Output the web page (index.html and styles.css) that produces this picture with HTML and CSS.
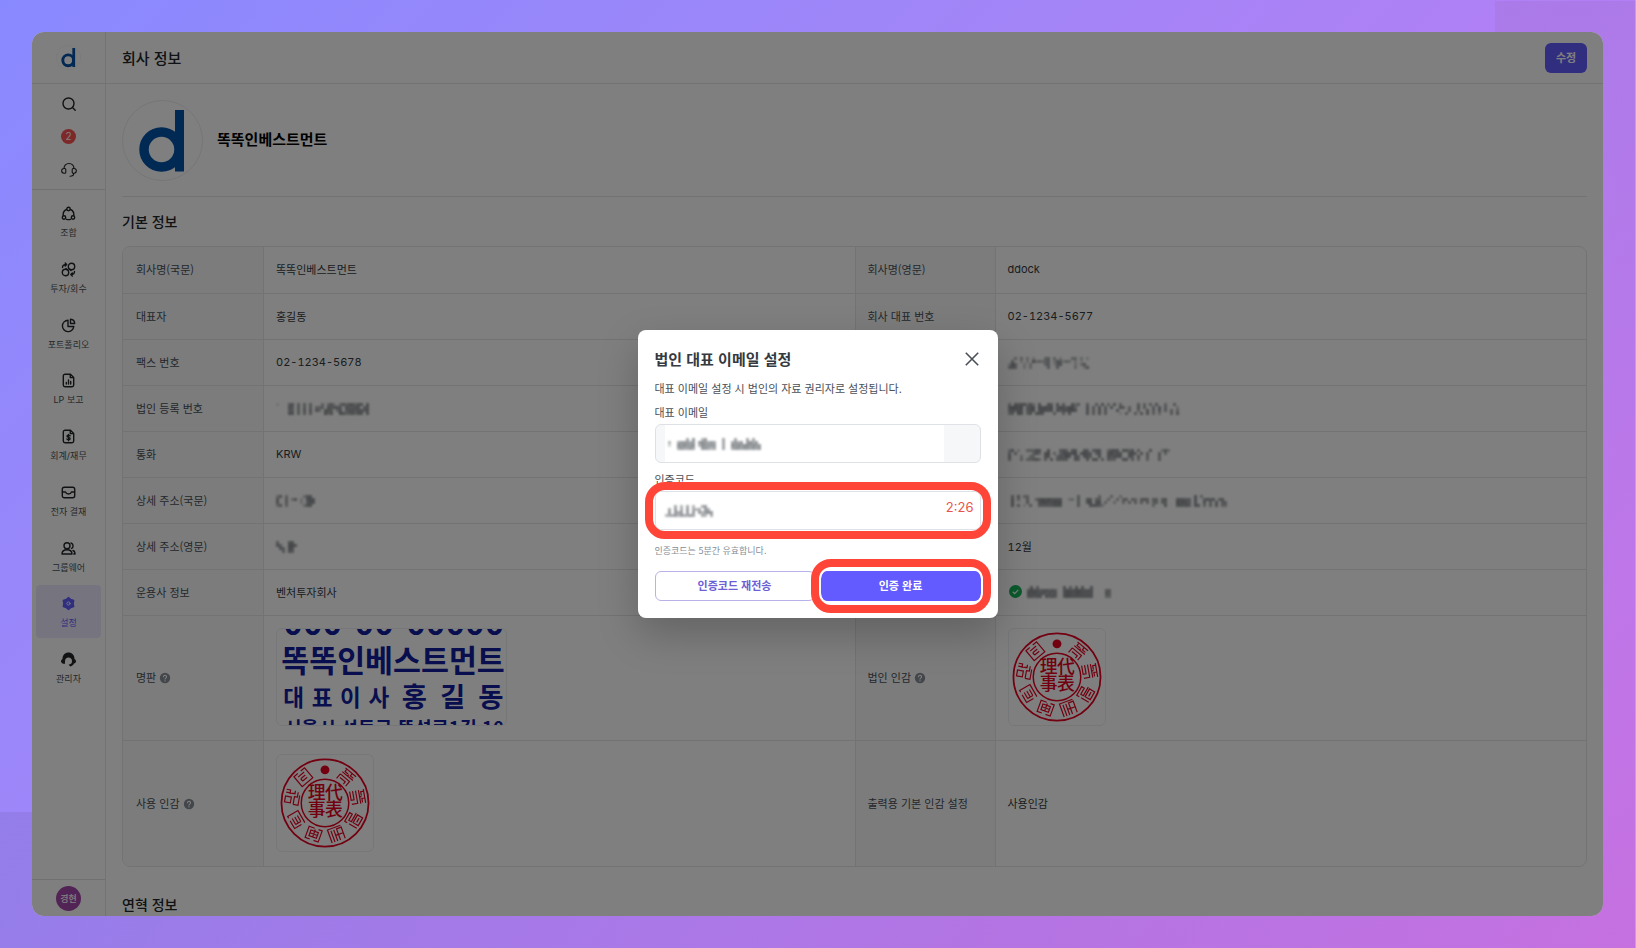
FILE: index.html
```html
<!DOCTYPE html>
<html lang="ko">
<head>
<meta charset="utf-8">
<title>회사 정보</title>
<link rel="stylesheet" href="styles.css">
</head>
<body>
<svg class="defs" aria-hidden="true">
  <symbol id="logo" viewBox="0 0 81 81">
    <circle cx="40.500" cy="40.500" r="40" fill="#fff" stroke="#e9ebee"/>
    <circle cx="39.500" cy="49.500" r="17.500" fill="none" stroke="#0052a8" stroke-width="9.500"/>
    <path d="M53 10H62V71.500H53Z" fill="#0052a8"/>
  </symbol>
  <symbol id="help" viewBox="0 0 12 12">
    <circle cx="6" cy="6" r="5.200" fill="#868e96"/>
    <path d="M4.500 4.800a1.500 1.500 0 1 1 2.200 1.300c-.5.3-.7.5-.7 1M6 8.600v.4" fill="none" stroke="#fff" stroke-width="1.100" stroke-linecap="round"/>
  </symbol>
  <symbol id="seal" viewBox="0 0 97 97">
    <g fill="none" stroke="#e60020">
      <circle cx="48.500" cy="48.500" r="44" stroke-width="1.800"/>
      <circle cx="48.500" cy="48.500" r="24" stroke-width="1.500"/>
      <g stroke-width="1.200">
        <path transform="translate(48.500 48.500) rotate(40) translate(0 -33.500)" d="M-7-7H7M-5-7V-4H-1M2-7V-4H6M-7-2H7M0-4V-2M-7 1H5V7M-5 4H2V7M-7 1V7"/>
        <path transform="translate(48.500 48.500) rotate(80) translate(0 -33.500)" d="M-7-7H7M-5-7V-4H-1M2-7V-4H6M-7-2H7M0-4V-2M-7 1H6V7M-7 4H2V7H-7"/>
        <path transform="translate(48.500 48.500) rotate(120) translate(0 -33.500)" d="M-6-7H3V-1H-6ZM-4-4H1M6-7V2M-7 1H3V4H-4V7H6V4"/>
        <path transform="translate(48.500 48.500) rotate(160) translate(0 -33.500)" d="M-7-7V5H-2V-7M-7-1H-2M1-7V5M1-1H-2M4-7V5M7-7V7H-7"/>
        <path transform="translate(48.500 48.500) rotate(200) translate(0 -33.500)" d="M-2-6H-7V6H-3M2-6H7V6H1M-4-3H4V3H-4ZM-4 0H4M0-3V5"/>
        <path transform="translate(48.500 48.500) rotate(240) translate(0 -33.500)" d="M2-6H-7V2M-7 6H7V-6H5M-4-3H3M-4 0H3M-4 3H3M-4-3V3"/>
        <path transform="translate(48.500 48.500) rotate(280) translate(0 -33.500)" d="M-6-7H0V-1H-6ZM4-7V2H7M-7 2H1V5H6M-7 2V7H3M3-3H7V-7"/>
        <path transform="translate(48.500 48.500) rotate(320) translate(0 -33.500)" d="M-2-7H-7V6H7V-7H2M-4-4H4M-3-1H3M-3 2H3M-3-1V2"/>
      </g>
    </g>
    <circle cx="48.500" cy="15" r="4.500" fill="#e60020"/>
    <text class="seal-text" x="31 48.500" y="44">理代</text>
    <text class="seal-text" x="31 48.500" y="62">事表</text>
  </symbol>
</svg>

<div class="window">
  <aside class="sidebar">
    <a class="brand" href="#" aria-label="홈"><svg width="25" height="25"><use href="#logo"/></svg></a>
    <div class="tools">
      <button class="tool" aria-label="검색"><svg width="16" height="16" viewBox="0 0 16 16"><circle cx="7.500" cy="7.500" r="5.500"/><path d="M11.500 11.500L14.200 14.200"/></svg></button>
      <button class="tool" aria-label="알림"><span class="badge">2</span></button>
      <button class="tool" aria-label="고객 지원"><svg class="thin" width="16" height="16" viewBox="0 0 16 16"><path d="M3 6.500C3 3.500 5 1.500 8 1.500S13 3.500 13 6.500M3 6.500H3.800a1 1 0 0 1 1 1V10.200a1 1 0 0 1-1 1H3a2.350 2.350 0 0 1 0-4.700ZM13 6.500H12.200a1 1 0 0 0-1 1V10.200a1 1 0 0 0 1 1H13a2.350 2.350 0 0 0 0-4.700ZM12.800 11.200c0 2-1.300 3-3.800 3"/></svg></button>
    </div>
    <ul class="menu">
      <li><a class="item" href="#"><svg width="15" height="15" viewBox="0 0 15 15"><circle cx="7.500" cy="3" r="1.700"/><circle cx="3" cy="11.500" r="1.700"/><circle cx="12" cy="11.500" r="1.700"/><path d="M5.500 3.500C3 4.500 2 7 2.200 9.300M9.500 3.500C12 4.500 13 7 12.800 9.300M5.500 13.300a6 6 0 0 0 4 0"/></svg>조합</a></li>
      <li><a class="item" href="#"><svg width="15" height="15" viewBox="0 0 15 15"><circle cx="10.500" cy="4.500" r="3.200"/><circle cx="4.500" cy="10.500" r="3.200"/><path d="M1.500 5.500C1.500 3.500 3 2.500 5.500 2.500M4.200 1L5.700 2.500 4.200 4M13.500 9.500c0 2-1.500 3-3.500 3M11.300 11L9.800 12.500 11.300 14M6.500 8L5 6.500M8.500 7L10 8.500"/></svg>투자/회수</a></li>
      <li><a class="item" href="#"><svg width="15" height="15" viewBox="0 0 15 15"><path d="M7 2.200A5.700 5.700 0 1 0 12.800 8.500H7ZM9.500 1.300V5.500H13.700A4.500 4.500 0 0 0 9.500 1.300Z"/></svg>포트폴리오</a></li>
      <li><a class="item" href="#"><svg width="15" height="15" viewBox="0 0 15 15"><path d="M9.500 1.200H4A1.700 1.700 0 0 0 2.300 2.900V12.100A1.700 1.700 0 0 0 4 13.800H11A1.700 1.700 0 0 0 12.700 12.100V4.400ZM9.300 1.500V4.600H12.400M5.300 9.500V11M7.500 7V11M9.700 8.500V11"/></svg>LP 보고</a></li>
      <li><a class="item" href="#"><svg width="15" height="15" viewBox="0 0 15 15"><path d="M9.500 1.200H4A1.700 1.700 0 0 0 2.300 2.900V12.100A1.700 1.700 0 0 0 4 13.800H11A1.700 1.700 0 0 0 12.700 12.100V4.400ZM9.300 1.500V4.600H12.400M9.100 6.800C8.500 6 6 6 6 7.300S9.100 8.300 9.100 9.700 6.400 11 5.800 10M7.500 5.500V11.700"/></svg>회계/재무</a></li>
      <li><a class="item" href="#"><svg width="15" height="15" viewBox="0 0 15 15"><rect x="1.300" y="2.200" width="12.400" height="10.600" rx="2"/><path d="M1.500 7H4.500C5 8.500 6 9 7.500 9S10 8.500 10.500 7H13.500"/></svg>전자 결재</a></li>
      <li><a class="item" href="#"><svg width="15" height="15" viewBox="0 0 15 15"><circle cx="6" cy="4.800" r="3"/><path d="M1 13c0-3 2-4.200 5-4.200S11 10 11 13ZM10 2A3 3 0 0 1 10.500 7.500M12 9.500c1.500.5 2 1.500 2 3.500H12.800"/></svg>그룹웨어</a></li>
      <li><a class="item active" href="#" aria-current="page"><svg width="15" height="15" viewBox="0 0 15 15"><path class="gear" d="M7.500 1.500L9.600 3.300 12.700 4.300 12.200 7.500 12.700 10.700 9.600 11.700 7.500 13.500 5.400 11.700 2.300 10.700 2.800 7.500 2.300 4.300 5.400 3.300Z"/><circle class="hole" cx="7.500" cy="7.500" r="1.600"/></svg>설정</a></li>
      <li><a class="item" href="#"><svg width="15" height="15" viewBox="0 0 15 15"><path class="solid" d="M1.500 7C1.500 3 4 .5 7.500.5S13.500 3 13.500 7c1 .5 1.500 1.300 1.500 2.200 0 1.300-.8 2.200-2 2.300-.6 1.500-1.800 2.400-3.600 3L7.500 12.800C9.600 12.300 11 11.500 11 9.500 11 6.500 9.500 5.500 7.500 5.500S4 6.500 4 9.500V11.800C1.500 11.800 0 10.800 0 9.200.2 8.300.5 7.500 1.500 7Z"/></svg>관리자</a></li>
    </ul>
    <div class="account"><button class="avatar">경현</button></div>
  </aside>

  <main class="main">
    <header class="topbar">
      <h1 class="page-title">회사 정보</h1>
      <button class="edit">수정</button>
    </header>
    <div class="content">
      <section class="company">
        <svg width="81" height="81"><use href="#logo"/></svg>
        <strong class="company-name">똑똑인베스트먼트</strong>
      </section>
      <h2 class="section-title">기본 정보</h2>
      <table class="info">
        <colgroup><col class="col-label"><col><col class="col-label"><col></colgroup>
        <tbody>
        <tr><th scope="row">회사명(국문)</th><td>똑똑인베스트먼트</td><th scope="row">회사명(영문)</th><td>ddock</td></tr>
        <tr><th scope="row">대표자</th><td>홍길동</td><th scope="row">회사 대표 번호</th><td>02-1234-5677</td></tr>
        <tr><th scope="row">팩스 번호</th><td>02-1234-5678</td><th scope="row">사업자 등록 번호</th><td><span class="mask" data-rows="005050403000560503000550403|060030308454560376354030200|386003040000560267000030470|676003040000060060000040037"></span></td></tr>
        <tr><th scope="row">법인 등록 번호</th><td><span class="mask" data-rows="2000670606060005057305757757707|0000760606060556076776076677067|0000660607070750776057067767767|0000770606060000857008756757707"></span></td><th scope="row">대표 이메일</th><td><span class="mask" data-rows="507677474070076070600746006006070507050000060506070050060|788780678087878068768850007060706070076050070600607060003|676770678078777076778870007060706000700060050070607060605|560870570777000600607000007060706000020600607070504000607"></span></td></tr>
        <tr><th scope="row">통화</th><td>KRW</td><th scope="row">홈페이지</th><td><span class="mask" data-rows="470300555770070006760770076067700577707757060007000474|606000005750780505787780787606700786770078607060006050|700040055000770057687076077600700767770076070060006000|600050556750607066660076007077060655007706050050006000"></span></td></tr>
        <tr><th scope="row">상세 주소(국문)</th><td><span class="mask" data-rows="4705000004770|7006047030787|7006000030687|4705000004770"></span></td><th scope="row">상세 주소(영문)</th><td><span class="mask" data-rows="0607055000000000000000060000005000500400000000000000000000000070500000000|0705006005787877770034060077066005005066065067606606700077766070067670670|0700006000788778880000060078078050040050606060605606600087876070070607066|0706020600666667770000060007776400000000000000005000700077676077050607055"></span></td></tr>
        <tr><th scope="row">상세 주소(영문)</th><td><span class="mask" data-rows="6000770|7600887|0760870|0060760"></span></td><th scope="row">결산월</th><td>12월</td></tr>
        <tr><th scope="row">운용사 정보</th><td>벤처투자회사</td><th scope="row">이메일 인증</th><td><span class="verified"><svg width="13" height="13" viewBox="0 0 13 13"><circle cx="6.500" cy="6.500" r="6.500" fill="#14b45a"/><path d="M3.700 6.700L5.700 8.600 9.300 4.900" fill="none" stroke="#fff" stroke-width="1.200"/></svg><span class="mask" data-rows="0706000000007060707007000000|7877677676007877887777000066|8787776767007887887777000076|7767707676007877777777000055"></span></span></td></tr>
        <tr class="tall"><th scope="row">명판 <svg class="help" width="12" height="12"><use href="#help"/></svg></th>
          <td><svg class="frame" width="231" height="98" viewBox="0 0 231 98" role="img" aria-label="명판"><g class="plate">
            <text class="plate-number" x="5" y="6">000-00-00000</text>
            <text class="plate-name" x="3" y="44">똑똑인베스트먼트</text>
            <text class="plate-role" x="5 34 63 92" y="79">대표이사</text>
            <text class="plate-person" x="126 165 204" y="80">홍길동</text>
            <text class="plate-address" x="6" y="108">서울시 성동구 뚝섬로1길 10</text></g></svg></td>
          <th scope="row">법인 인감 <svg class="help" width="12" height="12"><use href="#help"/></svg></th>
          <td><svg class="frame" width="98" height="98" role="img" aria-label="법인 인감"><use href="#seal"/></svg></td></tr>
        <tr class="tall"><th scope="row">사용 인감 <svg class="help" width="12" height="12"><use href="#help"/></svg></th>
          <td><svg class="frame" width="98" height="98" role="img" aria-label="사용 인감"><use href="#seal"/></svg></td>
          <th scope="row">출력용 기본 인감 설정</th><td>사용인감</td></tr>
        </tbody>
      </table>
      <h2 class="section-title">연혁 정보</h2>
    </div>
  </main>

  <div class="scrim">
    <form class="modal" role="dialog" aria-labelledby="dialog-title">
      <div class="modal-head">
        <h2 class="modal-title" id="dialog-title">법인 대표 이메일 설정</h2>
        <button class="close" type="button" aria-label="닫기"><svg width="14" height="14" viewBox="0 0 14 14"><path d="M.8.800L13.200 13.200M13.200.800L.8 13.200"/></svg></button>
      </div>
      <p class="desc">대표 이메일 설정 시 법인의 자료 권리자로 설정됩니다.</p>
      <label class="label" for="email">대표 이메일</label>
      <div class="field">
        <input class="input disabled" id="email" type="email" readonly>
        <span class="patch"><span class="mask" data-rows="00000006070057000006000600060600|05006777670787676006006767078670|03008787780587777006008787887877|00006766760077656006006776776767"></span></span>
      </div>
      <label class="label" for="code">인증코드</label>
      <div class="field ring">
        <input class="input" id="code" type="text">
        <span class="patch bare"><span class="mask" data-rows="0006050605006700|0607060706560760|0707670707075787|5667576676006506"></span></span>
        <span class="timer">2:26</span>
      </div>
      <p class="hint">인증코드는 5분간 유효합니다.</p>
      <div class="actions">
        <button class="btn outline" type="button">인증코드 재전송</button>
        <div class="confirm ring"><button class="btn primary" type="button">인증 완료</button></div>
      </div>
    </form>
  </div>
</div>
<script src="mask.js"></script>
</body>
</html>
```

FILE: styles.css
```css
* { box-sizing: border-box; }
html, body { height: 100%; }
body {
  margin: 0;
  padding: 32px;
  border-right: 1px solid #a9a4ff;
  overflow: hidden;
  font-family: Inter, "Noto Sans CJK KR", sans-serif;
  font-size: 11px;
  color: #343a40;
  background:
    linear-gradient(rgba(150, 100, 180, .2), rgba(150, 100, 180, 0)) right 0 top 1px / 141px 600px no-repeat,
    linear-gradient(90deg, rgba(120, 100, 190, .25), rgba(160, 90, 180, .22) 60%, rgba(190, 110, 200, 0)) left bottom / 100% 136px no-repeat,
    linear-gradient(135deg, #8989ff 0%, #9f86f8 35%, #b47ff5 65%, #c670e0 100%);
}
h1, h2, p, ul { margin: 0; padding: 0; }
button { font: inherit; padding: 0; border: 0; background: none; color: inherit; }
a { color: inherit; text-decoration: none; }
svg { display: block; }
.defs { display: none; }

.window {
  position: relative;
  display: flex;
  height: 100%;
  border-radius: 12px;
  overflow: hidden;
  background: #fff;
}

.sidebar {
  display: flex;
  flex-direction: column;
  flex: none;
  width: 74px;
  border-right: 1px solid #e4e6ea;
}
.brand {
  display: flex;
  align-items: center;
  justify-content: center;
  height: 52px;
  border-bottom: 1px solid #e4e6ea;
}
.tools {
  padding: 3px 0;
  border-bottom: 1px solid #dee0e4;
}
.tool {
  display: flex;
  align-items: center;
  justify-content: center;
  width: 100%;
  height: 33px;
}
.sidebar svg {
  fill: none;
  stroke: #212529;
  stroke-width: 1.4;
  stroke-linecap: round;
  stroke-linejoin: round;
}
.sidebar .brand svg { stroke: none; }
.sidebar .thin { stroke-width: 1.1; }
.badge {
  width: 15px;
  height: 15px;
  border-radius: 50%;
  background: #fa5252;
  color: #fff;
  font-size: 10px;
  line-height: 15px;
}
.menu {
  display: flex;
  flex-direction: column;
  justify-content: space-between;
  height: 499px;
  margin: 5px 4px;
  list-style: none;
}
.item {
  display: flex;
  flex-direction: column;
  align-items: center;
  gap: 5px;
  height: 53px;
  padding-top: 11px;
  border-radius: 4px;
  font-size: 9px;
  line-height: 14px;
  color: #495057;
}
.item.active { background: #ecebff; color: #635bff; }
.item .solid { fill: #212529; stroke: none; }
.item .gear { fill: #635bff; stroke: #635bff; }
.item .hole { stroke: #ecebff; stroke-width: 1; }
.account {
  display: flex;
  align-items: center;
  justify-content: center;
  height: 37px;
  margin-top: auto;
  border-top: 1px solid #dee0e4;
}
.avatar {
  width: 25px;
  height: 25px;
  border-radius: 50%;
  background: #a548ab;
  color: #fff;
  font-size: 9px;
  font-weight: 500;
}

.main { flex: 1; min-width: 0; }
.topbar {
  display: flex;
  align-items: center;
  justify-content: space-between;
  height: 52px;
  padding: 0 16px;
  border-bottom: 1px solid #e4e6ea;
}
.page-title, .company-name, .section-title, .modal-title, .label, .desc, .hint, .btn, .edit, .info th {
  font-family: "Noto Sans CJK KR", sans-serif;
}
.page-title { font-size: 15px; font-weight: 500; color: #212529; }
.edit {
  width: 42px;
  height: 30px;
  padding-bottom: 2px;
  border-radius: 6px;
  background: #635bff;
  color: #fff;
  font-size: 11px;
  font-weight: 700;
}
.content { padding: 0 16px; }
.company {
  display: flex;
  align-items: center;
  gap: 14px;
  height: 113px;
  border-bottom: 1px solid #e4e6ea;
}
.company-name { padding-bottom: 3px; font-size: 15px; font-weight: 700; color: #000; }
.section-title {
  margin: 14px 0 15px;
  font-size: 14px;
  font-weight: 500;
  line-height: 20px;
  color: #212529;
}
.info {
  width: 100%;
  margin-bottom: 27px;
  table-layout: fixed;
  border-collapse: separate;
  border-spacing: 0;
  border: 1px solid #e4e6ea;
  border-radius: 8px;
  overflow: hidden;
}
.col-label { width: 141px; }
.info th, .info td {
  height: 46px;
  padding: 0 12px 2px;
  border-bottom: 1px solid #e4e6ea;
  text-align: left;
  vertical-align: middle;
}
.info tr:first-child > * { height: 47px; }
.info tr:last-child > * { border-bottom: 0; }
.info .tall > * { height: 125px; }
.info th {
  padding-left: 13px;
  border-right: 1px solid #e4e6ea;
  background: #f8f9fa;
  font-weight: 400;
  color: #495057;
}
.info td + th { padding-left: 12px; border-left: 1px solid #e4e6ea; }
.info td { color: #343a40; font-variant-numeric: tabular-nums; }
.help { display: inline-block; vertical-align: -2px; }
.verified { display: flex; align-items: center; gap: 5px; padding-left: 1px; }
.frame { border: 1px solid #eceef1; border-radius: 6px; overflow: hidden; }
.seal-text { font-family: "Noto Sans CJK KR", sans-serif; font-size: 18px; font-weight: 500; fill: #e60020; }
.plate { font-family: "Noto Sans CJK KR", sans-serif; font-weight: 700; fill: #101c9c; }
.plate-number { font-size: 34px; }
.plate-name { font-size: 31px; }
.plate-role { font-size: 23px; }
.plate-person { font-size: 28px; }
.plate-address { font-size: 19px; }
.mask { display: inline-block; vertical-align: middle; }
.mask svg { filter: blur(1px); }

.scrim {
  position: absolute;
  inset: 0;
  display: flex;
  align-items: center;
  justify-content: center;
  background: rgba(0, 0, 0, .5);
}
.modal {
  width: 360px;
  padding: 17px;
  border-radius: 8px;
  background: #fff;
  box-shadow: 0 16px 40px rgba(0, 0, 0, .22);
}
.modal-head {
  display: flex;
  align-items: center;
  justify-content: space-between;
  height: 24px;
  padding-right: 2px;
}
.modal-title { font-size: 15px; font-weight: 700; line-height: 24px; }
.close svg { fill: none; stroke: #495057; stroke-width: 1.6; }
.desc { margin-top: 9px; line-height: 16px; color: #495057; }
.label { display: block; margin: 8px 0 4px; line-height: 16px; color: #495057; }
.field { position: relative; height: 39px; }
.input {
  width: 100%;
  height: 100%;
  padding: 0 10px;
  border: 1px solid #dee2e6;
  border-radius: 6px;
  background: #fff;
  font: inherit;
}
.disabled { background: #f6f7f9; }
.patch {
  position: absolute;
  inset: 1px 37px 1px 10px;
  display: flex;
  align-items: center;
  background: #fff;
}
.bare { background: none; }
.timer {
  position: absolute;
  top: 8px;
  right: 7px;
  font-size: 13px;
  line-height: 16px;
  color: #e8554e;
}
.ring::after {
  content: "";
  position: absolute;
  inset: -9px -10px;
  border: 8px solid #ff4438;
  border-radius: 20px;
  pointer-events: none;
}
.hint { margin-top: 13px; font-size: 9px; line-height: 16px; color: #868e96; }
.actions {
  display: grid;
  grid-template-columns: 1fr 1fr;
  gap: 6px;
  margin-top: 12px;
}
.confirm { position: relative; }
.confirm::after { inset: -12px -10px; box-shadow: inset 0 0 0 2px #fff; }
.btn {
  width: 100%;
  height: 30px;
  padding-bottom: 2px;
  border-radius: 6px;
  font-size: 11px;
  font-weight: 700;
}
.outline { border: 1px solid #b9b2e8; color: #6c5fd6; }
.primary { display: block; background: #635bff; color: #fff; }
```

FILE: mask.js
```js
// Draws redacted values as a mosaic: every digit is the darkness of one cell.
const CELL = 3;
document.querySelectorAll(".mask").forEach((el) => {
  const rows = el.dataset.rows.split("|");
  const width = Math.max(...rows.map((r) => r.length)) * CELL;
  const cells = rows.flatMap((row, y) =>
    [...row].map((v, x) =>
      v === "0" ? "" : `<rect x="${x * CELL}" y="${y * CELL}" width="${CELL}" height="${CELL}" fill="#343a40" opacity="${(v / 14).toFixed(2)}"/>`
    )
  );
  el.innerHTML = `<svg width="${width}" height="${rows.length * CELL}" aria-hidden="true">${cells.join("")}</svg>`;
});
```
